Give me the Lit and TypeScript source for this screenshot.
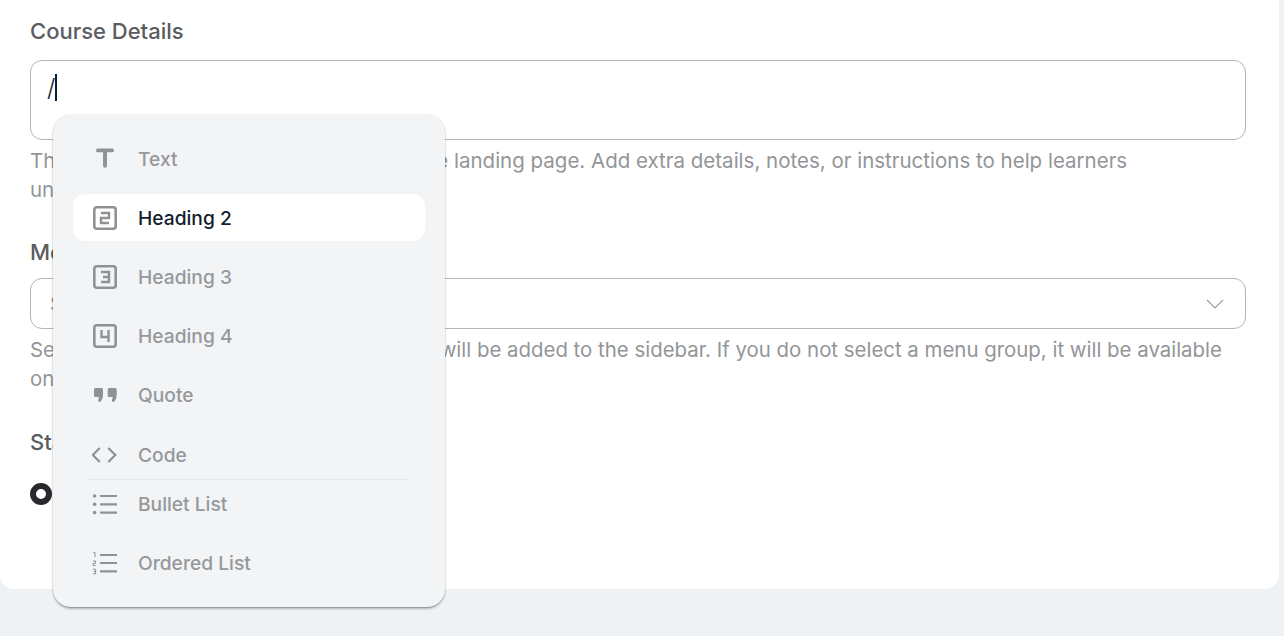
import { LitElement, html, css, svg } from "lit";
import { customElement } from "lit/decorators.js";

const box = (d: string) => svg`<g transform="translate(1 0)"><rect x="1.3" y="1.3" width="21.4" height="21.4" rx="2.4" fill="none" stroke="currentColor" stroke-width="2.6"/><path d=${d} fill="none" stroke="currentColor" stroke-width="2.4"/></g>`;

const icons: Record<string, unknown> = {
  text: svg`<path d="M6 3.4H20M13 3.4V18.8" fill="none" stroke="currentColor" stroke-width="3.9" stroke-linecap="round"/>`,
  h2: box("M8 7H16V12H8V17H16"),
  h3: box("M8 7H16V17H8M10 12H16"),
  h4: box("M8.5 6V13H16M15.5 6V18"),
  quote: svg`<path d="M3.5 5H9.5A1.5 1.5 0 0 1 11 6.5V12C11 14.5 10 17 8.5 18.8H6L7 14H3.5A1.5 1.5 0 0 1 2 12.5V6.5A1.5 1.5 0 0 1 3.5 5Z" fill="currentColor"/><path d="M17.2 5H23.2A1.5 1.5 0 0 1 24.7 6.5V12C24.7 14.5 23.7 17 22.2 18.8H19.7L20.7 14H17.2A1.5 1.5 0 0 1 15.7 12.5V6.5A1.5 1.5 0 0 1 17.2 5Z" fill="currentColor"/>`,
  code: svg`<path d="M8.5 5L1.5 12L8.5 19M17 5L24 12L17 19" fill="none" stroke="currentColor" stroke-width="2.2" transform="translate(-.7 0)"/>`,
  bullet: svg`<path d="M8 4H25M8 12.3H25M8 20.6H25" fill="none" stroke="currentColor" stroke-width="2.2"/><circle cx="2.6" cy="4" r="1.8" fill="currentColor"/><circle cx="2.6" cy="12.3" r="1.8" fill="currentColor"/><circle cx="2.6" cy="20.6" r="1.8" fill="currentColor"/>`,
  ordered: svg`<path d="M8 4H25M8 12H25M8 20.4H25" fill="none" stroke="currentColor" stroke-width="2.2"/><path d="M1.4 1.6H3V6.2M1 10H3.6V12.2H1V14.4H3.8M1 18.2H3.6V22.8H1M1.6 20.5H3.6" fill="none" stroke="currentColor" stroke-width="1"/>`,
};

const groups = [
  [
    { key: "text", label: "Text" },
    { key: "h2", label: "Heading 2", active: true },
    { key: "h3", label: "Heading 3" },
    { key: "h4", label: "Heading 4" },
    { key: "quote", label: "Quote" },
    { key: "code", label: "Code" },
  ],
  [
    { key: "bullet", label: "Bullet List" },
    { key: "ordered", label: "Ordered List" },
  ],
];

@customElement("app-root")
export class AppRoot extends LitElement {
  static styles = css`
    :host {
      display: block;
      width: 1284px;
      height: 636px;
      background: #eef2f5;
      font-family: Inter, "Liberation Sans", sans-serif;
      overflow: hidden;
      position: relative;
    }
    .card {
      width: 1279px;
      height: 589px;
      box-sizing: border-box;
      background: #fff;
      border-radius: 0 0 14px 14px;
      padding: 16px 33px 0 30px;
      display: flex;
      flex-direction: column;
    }
    .label {
      font-size: 22px;
      line-height: 30px;
      font-weight: 500;
      color: #5a5c5f;
    }
    .editor {
      margin-top: 14px;
      height: 80px;
      box-sizing: border-box;
      border: 1px solid #b4b5b7;
      border-radius: 12px;
      padding: 12px 16px;
      display: flex;
      align-items: flex-start;
      font-size: 24px;
      line-height: 30px;
      font-weight: 300;
      color: #0f1d33;
    }
    .caret {
      width: 2px;
      height: 27px;
      margin-top: 1px;
      background: #0f1d33;
    }
    .help {
      margin: 6px 0 0;
      font-size: 20.5px;
      line-height: 29px;
      color: #939598;
    }
    .help.tight {
      font-size: 20.42px;
    }
    .second {
      margin-top: 33px;
    }
    .select {
      margin-top: 11px;
      height: 51px;
      box-sizing: border-box;
      border: 1px solid #b4b5b7;
      border-radius: 12px;
      padding: 0 21px 0 19px;
      display: flex;
      align-items: center;
      justify-content: space-between;
      font-size: 20.5px;
      color: #939598;
    }
    .chev {
      width: 18px;
      height: 10px;
      color: #9b9c9f;
    }
    .status {
      margin-top: 34px;
    }
    .radio-row {
      margin-top: 24px;
      display: flex;
      align-items: center;
      gap: 8px;
      font-size: 20.5px;
      color: #57595c;
    }
    .radio {
      width: 22px;
      height: 22px;
      box-sizing: border-box;
      border: 6px solid #27292d;
      border-radius: 50%;
      background: #fff;
    }
    .menu {
      position: absolute;
      left: 53px;
      top: 115px;
      width: 392px;
      height: 492px;
      box-sizing: border-box;
      padding: 20px;
      background: #f2f4f6;
      border-radius: 18px;
      box-shadow: 0 2px 3px -1px rgba(0, 0, 0, 0.5), 0 0 2px rgba(0, 0, 0, 0.14);
      display: flex;
      flex-direction: column;
    }
    .group {
      display: flex;
      flex-direction: column;
      gap: 12px;
    }
    .rule {
      height: 1px;
      margin: 1px 17px 1px 15px;
      background: #e6e8ea;
    }
    .item {
      height: 47.2px;
      box-sizing: border-box;
      border-radius: 12px;
      padding-left: 19px;
      display: flex;
      align-items: center;
      gap: 20px;
      font-size: 19.2px;
      font-weight: 500;
      color: #96989b;
    }
    .item.active {
      background: #fff;
      color: #111c2c;
    }
    .icon {
      width: 26px;
      height: 24px;
      flex: none;
      color: #8f9194;
    }
  `;

  render() {
    return html`
      <div class="card">
        <div class="label">Course Details</div>
        <div class="editor">/<span class="caret"></span></div>
        <p class="help">
          This content will be displayed in the course landing page. Add extra details, notes, or instructions to help learners<br />
          understand what to expect.
        </p>
        <div class="label second">Menu Group</div>
        <div class="select">
          <span>Select a menu group</span>
          <svg class="chev" viewBox="0 0 18 10"><path d="M1 1L9 9L17 1" fill="none" stroke="currentColor" stroke-width="1.1" /></svg>
        </div>
        <p class="help tight">
          Select a menu group and a link to its page will be added to the sidebar. If you do not select a menu group, it will be available<br />
          only through its direct link.
        </p>
        <div class="label status">Status</div>
        <div class="radio-row"><span class="radio"></span><span>Draft</span></div>
      </div>
      <div class="menu">
        ${groups.map(
          (g, i) => html`
            ${i > 0 ? html`<div class="rule"></div>` : ""}
            <div class="group">
              ${g.map(
                (it: { key: string; label: string; active?: boolean }) => html`
                  <div class="item ${it.active ? "active" : ""}">
                    <svg class="icon" viewBox="0 0 26 24">${icons[it.key]}</svg>
                    <span>${it.label}</span>
                  </div>
                `
              )}
            </div>
          `
        )}
      </div>
    `;
  }
}
